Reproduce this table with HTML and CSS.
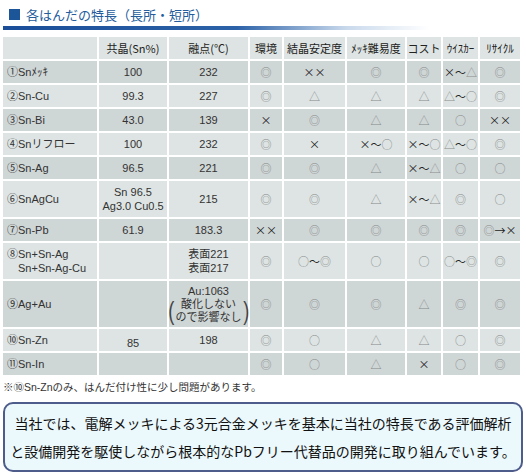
FILE: index.html
```html
<!DOCTYPE html>
<html lang="ja">
<head>
  <meta charset="UTF-8" />
  <title>各はんだの特長</title>
  <link rel="stylesheet" href="styles.css">
</head>
<body>
  <div class="page">
    <h2 class="heading"><span class="sq"></span>各はんだの特長（長所・短所）</h2>
    <div class="rule"></div>

    <table class="solder">
      <colgroup>
        <col class="c-name"><col class="c-eut"><col class="c-melt"><col class="c-env">
        <col class="c-cry"><col class="c-plt"><col class="c-cost"><col class="c-wh"><col class="c-rec">
      </colgroup>
      <thead>
        <tr class="light">
          <th></th><th>共晶(Sn%)</th><th>融点(℃)</th><th>環境</th><th>結晶安定度</th>
          <th>ﾒｯｷ難易度</th><th>コスト</th><th>ｳｲｽｶｰ</th><th>ﾘｻｲｸﾙ</th>
        </tr>
      </thead>
      <tbody>
        <tr class="dark">
          <td class="name">①Snﾒｯｷ</td><td>100</td><td>232</td>
          <td class="m g">◎</td><td class="m x">××</td><td class="m g">◎</td><td class="m g">◎</td>
          <td class="m"><span class="x">×</span>〜<span class="g">△</span></td><td class="m g">◎</td>
        </tr>
        <tr class="light">
          <td class="name">②Sn-Cu</td><td>99.3</td><td>227</td>
          <td class="m g">◎</td><td class="m g">△</td><td class="m g">△</td><td class="m g">△</td>
          <td class="m"><span class="g">△</span>〜<span class="g">○</span></td><td class="m g">◎</td>
        </tr>
        <tr class="dark">
          <td class="name">③Sn-Bi</td><td>43.0</td><td>139</td>
          <td class="m x">×</td><td class="m g">◎</td><td class="m g">△</td><td class="m g">△</td>
          <td class="m g">○</td><td class="m x">××</td>
        </tr>
        <tr class="light">
          <td class="name">④Snリフロー</td><td>100</td><td>232</td>
          <td class="m g">◎</td><td class="m x">×</td>
          <td class="m"><span class="x">×</span>〜<span class="g">○</span></td>
          <td class="m"><span class="x">×</span>〜<span class="g">○</span></td>
          <td class="m"><span class="g">△</span>〜<span class="g">○</span></td><td class="m g">◎</td>
        </tr>
        <tr class="dark">
          <td class="name">⑤Sn-Ag</td><td>96.5</td><td>221</td>
          <td class="m g">◎</td><td class="m g">◎</td><td class="m g">△</td>
          <td class="m"><span class="x">×</span>〜<span class="g">△</span></td>
          <td class="m g">○</td><td class="m g">○</td>
        </tr>
        <tr class="light two">
          <td class="name">⑥SnAgCu</td><td>Sn 96.5<br>Ag3.0 Cu0.5</td><td>215</td>
          <td class="m g">◎</td><td class="m g">◎</td><td class="m g">△</td>
          <td class="m"><span class="x">×</span>〜<span class="g">△</span></td>
          <td class="m g">◎</td><td class="m g">○</td>
        </tr>
        <tr class="dark">
          <td class="name">⑦Sn-Pb</td><td>61.9</td><td>183.3</td>
          <td class="m x">××</td><td class="m g">◎</td><td class="m g">◎</td><td class="m g">◎</td>
          <td class="m g">◎</td><td class="m"><span class="g">◎</span>→<span class="x">×</span></td>
        </tr>
        <tr class="light two">
          <td class="name">⑧Sn+Sn-Ag<br><span class="indent">Sn+Sn-Ag-Cu</span></td><td></td><td>表面221<br>表面217</td>
          <td class="m g">◎</td><td class="m"><span class="g">○</span>〜<span class="g">◎</span></td>
          <td class="m g">○</td><td class="m g">○</td>
          <td class="m"><span class="g">○</span>〜<span class="g">◎</span></td><td class="m g">◎</td>
        </tr>
        <tr class="dark">
          <td class="name">⑨Ag+Au</td><td></td>
          <td>
            <div class="au">Au:1063</div>
            <div class="paren"><span class="pb">(</span><span>酸化しない<br>ので影響なし</span><span class="pb">)</span></div>
          </td>
          <td class="m g">◎</td><td class="m g">◎</td><td class="m g">◎</td><td class="m g">△</td>
          <td class="m g">◎</td><td class="m g">◎</td>
        </tr>
        <tr class="light">
          <td class="name">⑩Sn-Zn</td><td class="low">85</td><td>198</td>
          <td class="m g">◎</td><td class="m g">○</td><td class="m g">△</td><td class="m g">△</td>
          <td class="m g">○</td><td class="m g">◎</td>
        </tr>
        <tr class="dark">
          <td class="name">⑪Sn-In</td><td></td><td></td>
          <td class="m g">◎</td><td class="m g">○</td><td class="m g">△</td><td class="m x">×</td>
          <td class="m g">○</td><td class="m g">◎</td>
        </tr>
      </tbody>
    </table>

    <p class="note">※⑩Sn-Znのみ、はんだ付け性に少し問題があります。</p>

    <div class="notice">
      当社では、電解メッキによる3元合金メッキを基本に当社の特長である評価解析<br>
      と設備開発を駆使しながら根本的なPbフリー代替品の開発に取り組んでいます。
    </div>
  </div>
</body>
</html>
```

FILE: styles.css
```css
body {
  margin: 0;
  background: #fff;
  font-family: 'Liberation Sans', 'Noto Sans CJK JP', sans-serif;
  color: #333;
}
.page {
  width: 520px;
  padding: 0 3px;
}
.heading {
  display: flex;
  align-items: center;
  height: 26px;
  margin: 0;
  padding: 3px 0 0 6px;
  box-sizing: border-box;
  font-size: 13px;
  font-weight: normal;
  color: #245c9c;
  font-family: 'Noto Sans CJK JP', sans-serif;
}
.sq {
  width: 11px;
  height: 11px;
  margin-right: 6px;
  background: #1d5599;
}
.rule {
  height: 4px;
  background: linear-gradient(to right, #1b4e98 0%, #2c62a8 45%, #c9d9ec 66%, #ffffff 82%);
}
.solder {
  width: 521px;
  margin: 5px 0 0 -2px;
  table-layout: fixed;
  border-collapse: separate;
  border-spacing: 2px;
  font-size: 11px;
}
.c-name { width: 94px; }
.c-eut { width: 68px; }
.c-melt { width: 79px; }
.c-env { width: 32px; }
.c-cry { width: 61px; }
.c-plt { width: 58px; }
.c-cost { width: 34px; }
.c-wh { width: 35px; }
.c-rec { width: 40px; }
.solder th,
.solder td {
  height: 15px;
  padding: 3.5px 0;
  line-height: 15px;
  text-align: center;
  white-space: nowrap;
  font-weight: normal;
}
.solder .two td {
  line-height: 14.5px;
}
.solder th {
  color: #222;
  font-family: 'Noto Sans CJK JP', sans-serif;
}
.light th,
.light td {
  background: #dde4e3;
}
.dark td {
  background: #cfd6d6;
}
.solder td.name {
  text-align: left;
  padding-left: 4px;
}
.indent {
  padding-left: 11px;
}
.solder td.m {
  font-family: 'Noto Sans CJK JP', sans-serif;
  font-size: 11px;
  color: #222;
}
.g {
  color: #8a8d8d;
}
.x {
  color: #1a1a1a;
}
.solder td.m.g {
  color: #868989;
}
.solder td.low {
  padding-top: 7px;
  padding-bottom: 0;
}
.au {
  line-height: 13px;
}
.paren {
  display: flex;
  justify-content: center;
  align-items: center;
  height: 26px;
  line-height: 13px;
}
.pb {
  font-size: 26px;
  line-height: 26px;
  font-weight: 300;
  color: #444;
  transform: scaleX(0.7);
}
.note {
  margin: 3px 0 0;
  font-size: 10.5px;
  line-height: 14px;
  color: #333;
}
.notice {
  margin: 8px 0 0;
  padding: 5px 0;
  border: 2px solid #4d5c8a;
  border-radius: 10px;
  background: #ebf8fc;
  text-align: center;
  font-family: 'Noto Sans CJK JP', sans-serif;
  font-size: 14px;
  line-height: 28px;
  color: #111;
}
```
